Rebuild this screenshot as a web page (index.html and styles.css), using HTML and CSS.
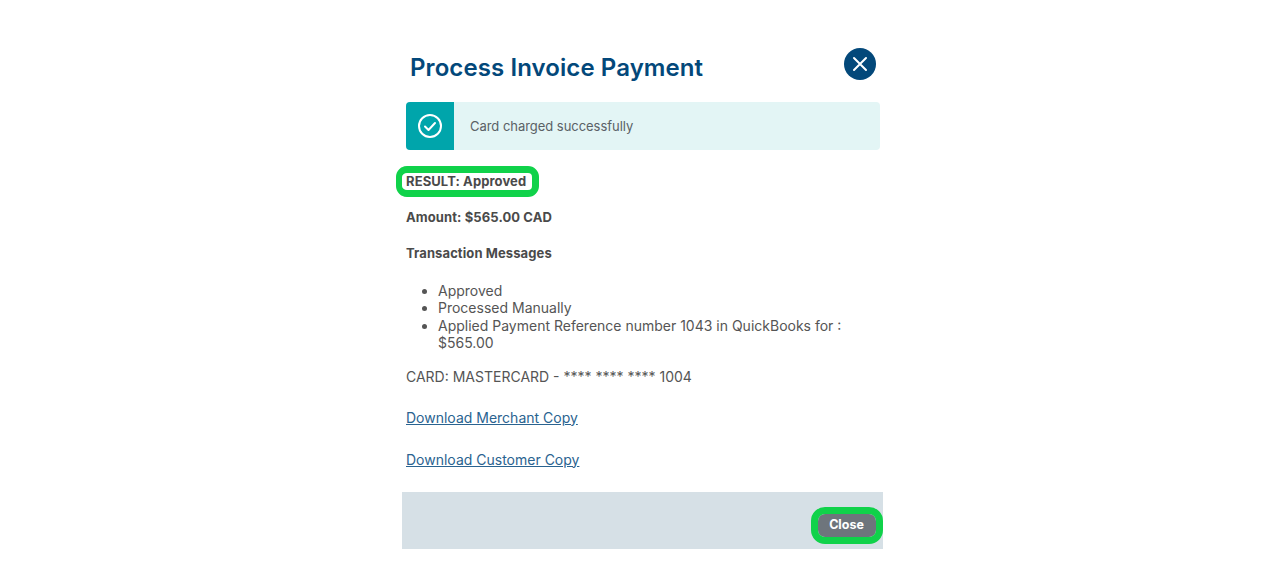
FILE: index.html

```html
<!DOCTYPE html>
<html lang="en">
<head>
    <meta charset="UTF-8">
    <meta name="viewport" content="width=device-width, initial-scale=1.0">
    <title>Process Invoice Payment</title>
    <link rel="stylesheet" href="styles.css">
</head>
<body>
    <div class="modal">
        <header class="modal-header">
            <h1>Process Invoice Payment</h1>
            <button class="close-icon" aria-label="Close">
                <svg width="32" height="32" viewBox="0 0 32 32">
                    <path d="M10 10 L22 22 M22 10 L10 22" stroke="#fff" stroke-width="2" stroke-linecap="round" fill="none"/>
                </svg>
            </button>
        </header>

        <div class="content">
            <div class="alert">
                <div class="alert-icon">
                    <svg width="26" height="26" viewBox="0 0 26 26">
                        <circle cx="13" cy="13" r="11" stroke="#fff" stroke-width="2" fill="none"/>
                        <path d="M8 13.5 L11.5 17 L18 10" stroke="#fff" stroke-width="2" stroke-linecap="round" stroke-linejoin="round" fill="none"/>
                    </svg>
                </div>
                <div class="alert-text">Card charged successfully</div>
            </div>

            <p class="result"><strong class="highlight">RESULT: Approved</strong></p>
            <p class="summary"><strong>Amount: $565.00 CAD</strong></p>
            <p class="summary"><strong>Transaction Messages</strong></p>

            <ul class="messages">
                <li>Approved</li>
                <li>Processed Manually</li>
                <li>Applied Payment Reference number 1043 in QuickBooks for : $565.00</li>
            </ul>

            <p class="card">CARD: MASTERCARD - **** **** **** 1004</p>

            <a class="download" href="#">Download Merchant Copy</a>
            <a class="download" href="#">Download Customer Copy</a>
        </div>

        <footer class="modal-footer">
            <button class="close-btn">Close</button>
        </footer>
    </div>
</body>
</html>
```

FILE: styles.css

```css
* {
    margin: 0;
    padding: 0;
    box-sizing: border-box;
    font-family: Inter, 'Noto Sans', sans-serif;
}

body {
    background-color: white;
    height: 588px;
    overflow: hidden;
}

.modal {
    width: 481px;
    margin-left: 402px;
    padding-top: 48px;
}

.modal-header {
    display: flex;
    justify-content: space-between;
    align-items: flex-start;
    height: 54px;
    padding: 0 7px 0 8px;
}

.modal-header h1 {
    font-size: 24px;
    font-weight: 600;
    line-height: 40px;
    letter-spacing: 0.09px;
    color: #03487a;
}

.close-icon {
    width: 32px;
    height: 32px;
    border: none;
    border-radius: 50%;
    background-color: #03487a;
    display: flex;
}

.content {
    padding: 0 3px 0 4px;
}

.alert {
    display: flex;
    height: 48px;
    border-radius: 4px;
    background-color: #e3f5f5;
    overflow: hidden;
}

.alert-icon {
    width: 48px;
    background-color: #00a5ab;
    display: flex;
    justify-content: center;
    align-items: center;
}

.alert-text {
    padding-left: 16px;
    font-size: 13px;
    line-height: 49px;
    letter-spacing: -0.04px;
    color: #5a6166;
}

.result,
.summary {
    font-size: 13px;
    line-height: 20px;
    letter-spacing: 0.1px;
    color: #4a4a4a;
}

.result {
    margin-top: 21px;
}

.summary {
    margin-top: 16px;
}

.highlight {
    display: inline-block;
    position: relative;
}

/* green annotation ring drawn over the row */
.highlight::after {
    content: "";
    position: absolute;
    box-sizing: border-box;
    top: -5px;
    left: -10px;
    width: 143px;
    height: 31px;
    border: solid #10d24a;
    border-width: 7px 7px 7px 6px;
    border-radius: 11px;
}

.messages {
    margin-top: 18.75px;
    padding-left: 32px;
    font-size: 14px;
    line-height: 17.5px;
    color: #555;
}

.card {
    margin-top: 16.25px;
    font-size: 14px;
    line-height: 17.5px;
    color: #555;
}

.download {
    display: block;
    margin-top: 24px;
    font-size: 14px;
    line-height: 18px;
    color: #2a6390;
}

.card + .download {
    margin-top: 23px;
}

.modal-footer {
    display: flex;
    justify-content: flex-end;
    align-items: center;
    height: 57px;
    margin-top: 23.5px;
    padding: 9px 7px 0 0;
    background-color: #d6e0e6;
}

.close-btn {
    width: 58px;
    height: 23px;
    padding: 0 1px 1px 0;
    border: none;
    border-radius: 7px;
    background-color: #6e757c;
    color: white;
    font-size: 12.5px;
    font-weight: 700;
    outline: 7px solid #10d24a;
}
```
